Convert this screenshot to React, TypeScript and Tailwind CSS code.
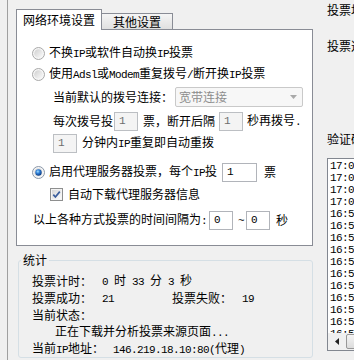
import { useId, type ReactNode } from 'react';

// half-width latin glyphs, like the bitmap font of the old dialog
function A({ children }: { children: ReactNode }) {
  return (
    <span className="font-['Liberation_Mono',monospace] text-[11px] tracking-[-0.6px]">{children}</span>
  );
}

function Radio({ checked = false }: { checked?: boolean }) {
  const id = useId().replace(/:/g, '');
  return (
    <svg width="13" height="13" viewBox="0 0 13 13" className="shrink-0">
      <defs>
        <linearGradient id={`${id}o`} x1="0" y1="0" x2="1" y2="1">
          <stop offset="0" stopColor="#cfcfcf" />
          <stop offset="1" stopColor="#fbfbfb" />
        </linearGradient>
        <radialGradient id={`${id}d`} cx="0.4" cy="0.35" r="0.65">
          <stop offset="0" stopColor="#9fe0ff" />
          <stop offset="0.45" stopColor="#2f7fd8" />
          <stop offset="1" stopColor="#0b3a80" />
        </radialGradient>
      </defs>
      <circle cx="6.5" cy="6.5" r="6" fill="#f6f6f6" stroke={checked ? '#8a97a8' : '#a8a8a8'} />
      <circle cx="6.5" cy="6.5" r="4.3" fill={`url(#${id}o)`} />
      {checked && <circle cx="6.5" cy="6.5" r="3.2" fill={`url(#${id}d)`} />}
    </svg>
  );
}

function Check() {
  const id = useId().replace(/:/g, '');
  return (
    <svg width="13" height="13" viewBox="0 0 13 13" className="shrink-0">
      <defs>
        <linearGradient id={`${id}c`} x1="0" y1="0" x2="1" y2="1">
          <stop offset="0" stopColor="#d6d6d6" />
          <stop offset="1" stopColor="#fcfcfc" />
        </linearGradient>
      </defs>
      <rect x="0.5" y="0.5" width="12" height="12" fill="#f4f4f4" stroke="#8e8f8f" />
      <rect x="2" y="2" width="9" height="9" fill={`url(#${id}c)`} />
      <path d="M3.3 6.6 L5.4 9 L9.8 3.6" fill="none" stroke="#3a5d9c" strokeWidth="1.7" />
    </svg>
  );
}

function Box({ value, w, disabled }: { value: string; w: string; disabled?: boolean }) {
  return (
    <div
      className={`flex h-[19px] shrink-0 items-center pl-[4px] ${w} ${
        disabled ? 'border border-[#bcbfc3] bg-[#f4f4f4] text-[#6d6d6d]' : 'border border-[#b1b4ba] bg-white text-black'
      }`}
    >
      <A>{value}</A>
    </div>
  );
}

const logRows = [
  '17:05:42',
  '17:04:18',
  '17:02:51',
  '17:01:09',
  '16:59:47',
  '16:58:30',
  '16:57:12',
  '16:56:03',
  '16:55:41',
  '16:54:25',
  '16:53:10',
  '16:52:02',
  '16:51:33',
  '16:50:48',
  '16:50:05',
];

export default function App() {
  return (
    <div className="flex h-[360px] w-[354px] overflow-hidden bg-[#f0f0f0] font-['Noto_Sans_CJK_SC',sans-serif] text-[12px] leading-[14px] text-black">
      {/* left column: tabs + stats */}
      <div className="ml-[7px] flex shrink-0 flex-col border-l border-[#a0a0a0] pl-[8px]">
        <div className="flex h-[29px] items-end">
          <div className="relative z-10 -mb-px flex h-[21px] w-[86px] items-center justify-center border border-b-0 border-[#898c95] bg-white">
            网络环境设置
          </div>
          <div className="flex h-[16px] w-[71px] items-center justify-center border-r border-t border-[#898c95] bg-linear-to-b from-[#f5f5f5] to-[#e0e0e0]">
            其他设置
          </div>
        </div>

        <div className="h-[217px] w-[297px] border border-[#898c95] bg-white pt-[13px]">
          <div className="flex h-[20px] items-center pl-[15px]">
            <Radio />
            <span className="ml-[4px]">
              不换<A>IP</A>或软件自动换<A>IP</A>投票
            </span>
          </div>
          <div className="mt-[1px] flex h-[20px] items-center pl-[15px]">
            <Radio />
            <span className="ml-[4px]">
              使用<A>Adsl</A>或<A>Modem</A>重复拨号<A>/</A>断开换<A>IP</A>投票
            </span>
          </div>
          <div className="mt-[3px] flex h-[20px] items-center pl-[36px]">
            <span>当前默认的拨号连接：</span>
            <div className="ml-[2px] flex h-[20px] w-[128px] items-center justify-between rounded-[2px] border border-[#c9c9c9] bg-[#f7f7f7] pl-[3px] pr-[5px] text-[#8d8d8d]">
              <span>宽带连接</span>
              <svg width="7" height="4" viewBox="0 0 7 4">
                <path d="M0 0 H7 L3.5 4 Z" fill="#a9a9a9" />
              </svg>
            </div>
          </div>
          <div className="mt-[4px] flex h-[20px] items-center pl-[36px]">
            <span>每次拨号投</span>
            <div className="ml-[1px]">
              <Box value="1" w="w-[24px]" disabled />
            </div>
            <span className="ml-[5px]">票，断开后隔</span>
            <div className="ml-[4px]">
              <Box value="1" w="w-[24px]" disabled />
            </div>
            <span className="ml-[4px]">
              秒再拨号<A>.</A>
            </span>
          </div>
          <div className="mt-[2px] flex h-[20px] items-center pl-[36px]">
            <Box value="1" w="w-[24px]" disabled />
            <span className="ml-[5px]">
              分钟内<A>IP</A>重复即自动重拨
            </span>
          </div>
          <div className="mt-[9px] flex h-[20px] items-center pl-[15px]">
            <Radio checked />
            <span className="ml-[4px]">
              启用代理服务器投票，每个<A>IP</A>投
            </span>
            <div className="ml-[5px]">
              <Box value="1" w="w-[35px]" />
            </div>
            <span className="ml-[7px]">票</span>
          </div>
          <div className="mt-[2px] flex h-[20px] items-center pl-[33px]">
            <Check />
            <span className="ml-[5px]">自动下载代理服务器信息</span>
          </div>
          <div className="mt-[6px] flex h-[20px] items-center pl-[16px]">
            <span>
              以上各种方式投票的时间间隔为<A>:</A>
            </span>
            <div className="ml-[2px]">
              <Box value="0" w="w-[24px]" />
            </div>
            <span className="ml-[5px]">
              <A>~</A>
            </span>
            <div className="ml-[2px]">
              <Box value="0" w="w-[24px]" />
            </div>
            <span className="ml-[6px]">秒</span>
          </div>
        </div>

        <fieldset className="ml-[2px] mt-[7px] w-[295px] rounded-[3px] border border-[#d5dfe5] pt-[5px]">
          <legend className="ml-[2px] px-[2px] leading-[14px]">统计</legend>
          <div className="flex h-[17px] items-center whitespace-pre pl-[13px]">
            <span className="w-[70px]">投票计时：</span>
            <span>
              <A>0 </A>时<A> 33 </A>分<A> 3 </A>秒
            </span>
          </div>
          <div className="flex h-[17px] items-center pl-[13px]">
            <span className="w-[70px]">投票成功：</span>
            <span className="w-[70px]">
              <A>21</A>
            </span>
            <span className="w-[70px]">投票失败：</span>
            <span>
              <A>19</A>
            </span>
          </div>
          <div className="flex h-[17px] items-center pl-[13px]">当前状态：</div>
          <div className="flex h-[17px] items-center pl-[36px]">
            <span>
              正在下载并分析投票来源页面<A>...</A>
            </span>
          </div>
          <div className="flex h-[17px] items-center pl-[13px]">
            <span className="w-[81px]">
              当前<A>IP</A>地址：
            </span>
            <span>
              <A>146.219.18.10:80(</A>代理<A>)</A>
            </span>
          </div>
        </fieldset>
      </div>

      {/* right column, cut by the window edge */}
      <div className="ml-[14px] flex w-[150px] shrink-0 flex-col whitespace-nowrap pt-[3px]">
        <div>投票地址：</div>
        <div className="mt-[22px]">投票选项：</div>
        <div className="mt-[79px]">验证码：</div>
        <div className="mt-[12px] flex h-[193px] w-[140px] flex-col border border-[#828790] bg-white">
          <div className="flex-1 overflow-hidden pl-[2px] pt-[1px]">
            {logRows.map((r) => (
              <div key={r} className="h-[12px] font-['Liberation_Mono',monospace] text-[11px] leading-[12px] tracking-[-0.6px]">
                {r}
              </div>
            ))}
          </div>
          <div className="flex h-[17px] items-center bg-[#f0f0f0]">
            <div className="flex h-[17px] w-[17px] items-center justify-center">
              <svg width="4" height="7" viewBox="0 0 4 7">
                <path d="M4 0 V7 L0 3.5 Z" fill="#222" />
              </svg>
            </div>
            <div className="ml-[1px] h-[15px] w-[60px] rounded-[2px] border border-[#979797] bg-linear-to-b from-[#f4f4f4] to-[#dcdcdc]" />
          </div>
        </div>
      </div>
    </div>
  );
}
